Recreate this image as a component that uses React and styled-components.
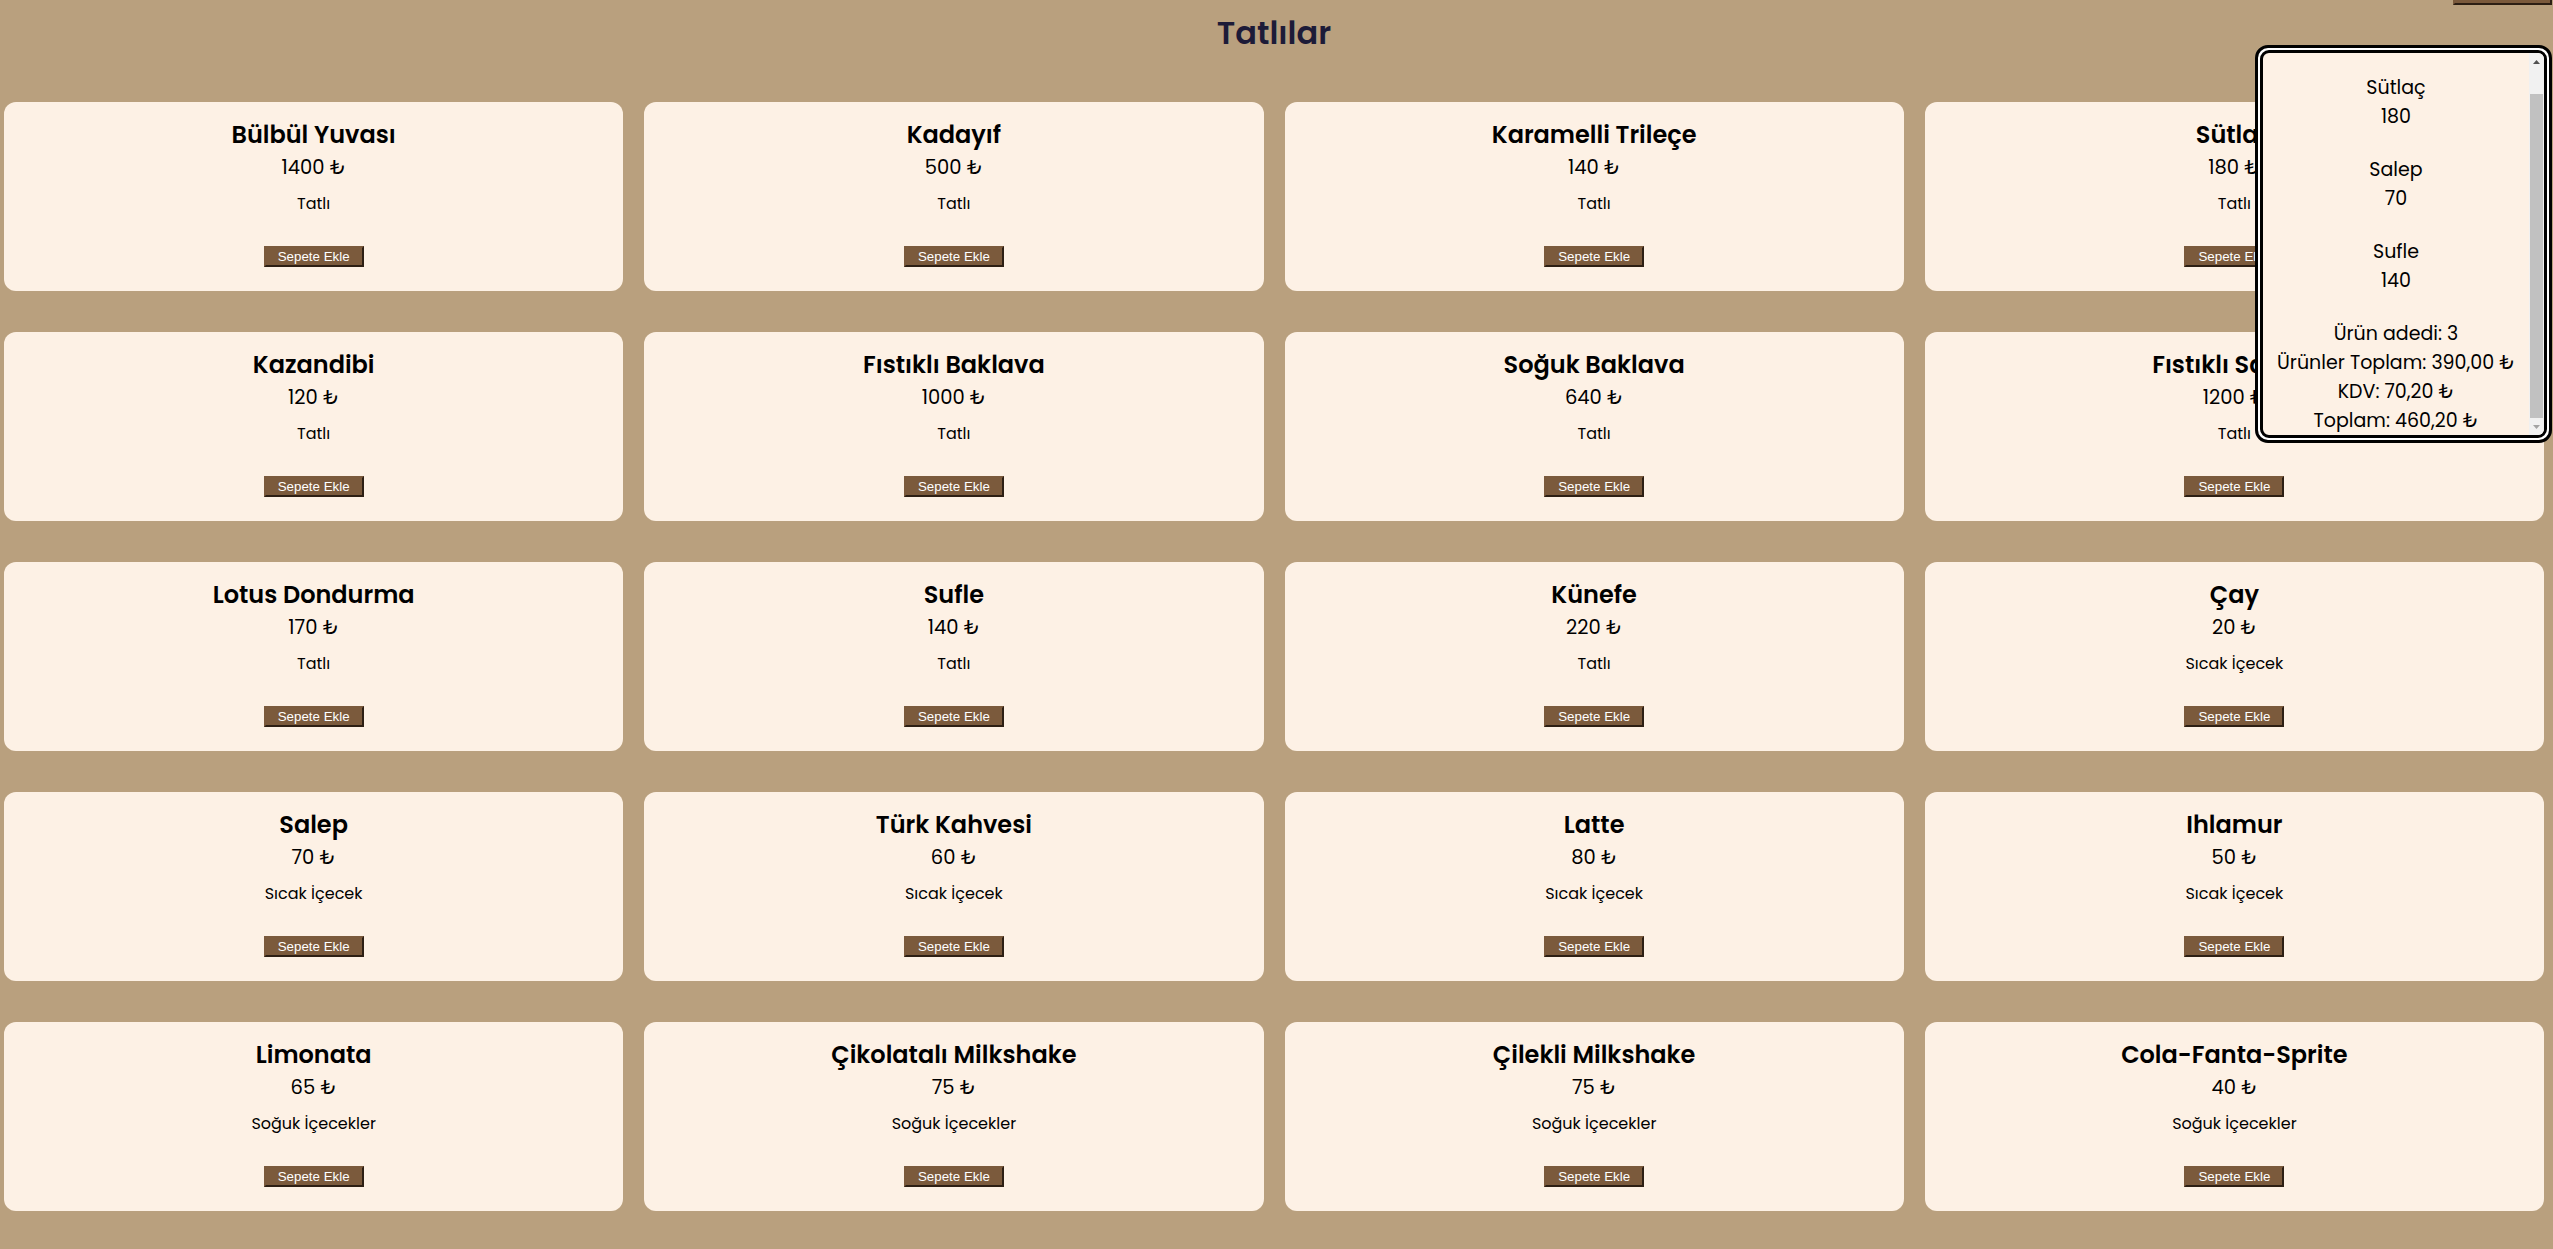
import React, { useLayoutEffect, useRef } from "react";
import styled, { createGlobalStyle } from "styled-components";

const GlobalStyle = createGlobalStyle`
  html, body { margin: 0; padding: 0; }
  body {
    background: #b9a07e;
    font-family: "Poppins", "Open Sans", "Noto Sans", sans-serif;
    color: #000;
  }
`;

const Page = styled.div`
  padding: 13px 9px 40px 4px;
`;

const Heading = styled.h1`
  margin: 0 0 49px;
  text-align: center;
  font-size: 32px;
  line-height: 40px;
  font-weight: 600;
  color: #1d1b38;
`;

const Grid = styled.div`
  display: grid;
  grid-template-columns: repeat(4, 1fr);
  column-gap: 21px;
  row-gap: 41px;
`;

const Card = styled.div`
  background: #fdf1e5;
  border-radius: 12px;
  height: 189px;
  box-sizing: border-box;
  padding-top: 18px;
  display: flex;
  flex-direction: column;
  align-items: center;
  text-align: center;
`;

const Name = styled.h2`
  margin: 0;
  font-size: 24px;
  line-height: 30px;
  font-weight: 600;
`;

const Price = styled.div`
  margin-top: 5px;
  font-size: 19.5px;
  line-height: 26px;
`;

const Category = styled.div`
  margin-top: 11px;
  font-size: 16px;
  line-height: 24px;
`;

const AddButton = styled.button`
  margin-top: 30px;
  width: 100px;
  height: 21px;
  padding: 0;
  box-sizing: border-box;
  background: #7b5a3c;
  color: #fff;
  font-family: "Liberation Sans", Arial, sans-serif;
  font-size: 13.33px;
  line-height: 15px;
  border-width: 2px;
  border-style: solid;
  border-color: #7b5a3c #2d1f14 #2d1f14 #7b5a3c;
  cursor: pointer;
`;

const ToggleButton = styled(AddButton)`
  position: fixed;
  margin: 0;
  top: -17px;
  right: 1px;
  width: 99px;
  height: 22px;
`;

const CartFrame = styled.div`
  position: fixed;
  top: 45px;
  right: 1px;
  width: 297px;
  height: 398px;
  box-sizing: border-box;
  border: 3px solid #000;
  border-radius: 13px;
  padding: 2px;
  background: #fff;
`;

const CartInner = styled.div`
  height: 100%;
  box-sizing: border-box;
  border: 3px solid #000;
  border-radius: 9px;
  background: #fdf1e5;
  overflow: hidden;
  display: flex;
`;

const CartScroll = styled.div`
  flex: 1;
  min-width: 0;
  overflow: hidden;
  text-align: center;
  font-size: 19px;
  line-height: 29px;
`;

const CartContent = styled.div`
  padding-top: 46px;
`;

const CartItem = styled.div`
  margin-bottom: 24px;
`;

const Summary = styled.div`
  margin-top: 3px;
`;

const Line = styled.div``;

const Scrollbar = styled.div`
  width: 15px;
  flex: none;
  background: #f1f1f1;
  display: flex;
  flex-direction: column;
`;

const ScrollArrow = styled.div`
  height: 17px;
  flex: none;
  display: flex;
  align-items: center;
  justify-content: center;
`;

const Track = styled.div`
  flex: 1;
  display: flex;
  flex-direction: column;
`;

const TrackSpace = styled.div`
  flex: ${(p) => p.$grow};
`;

const Thumb = styled.div`
  flex: ${(p) => p.$grow};
  margin: 0 1px;
  background: #c1c1c1;
`;

const Arrow = ({ up, color }) => (
  <svg width="7" height="4" viewBox="0 0 7 4">
    <path d={up ? "M0 4 L3.5 0 L7 4 Z" : "M0 0 L3.5 4 L7 0 Z"} fill={color} />
  </svg>
);

const products = [
  ["Bülbül Yuvası", 1400, "Tatlı"],
  ["Kadayıf", 500, "Tatlı"],
  ["Karamelli Trileçe", 140, "Tatlı"],
  ["Sütlaç", 180, "Tatlı"],
  ["Kazandibi", 120, "Tatlı"],
  ["Fıstıklı Baklava", 1000, "Tatlı"],
  ["Soğuk Baklava", 640, "Tatlı"],
  ["Fıstıklı Sarma", 1200, "Tatlı"],
  ["Lotus Dondurma", 170, "Tatlı"],
  ["Sufle", 140, "Tatlı"],
  ["Künefe", 220, "Tatlı"],
  ["Çay", 20, "Sıcak İçecek"],
  ["Salep", 70, "Sıcak İçecek"],
  ["Türk Kahvesi", 60, "Sıcak İçecek"],
  ["Latte", 80, "Sıcak İçecek"],
  ["Ihlamur", 50, "Sıcak İçecek"],
  ["Limonata", 65, "Soğuk İçecekler"],
  ["Çikolatalı Milkshake", 75, "Soğuk İçecekler"],
  ["Çilekli Milkshake", 75, "Soğuk İçecekler"],
  ["Cola-Fanta-Sprite", 40, "Soğuk İçecekler"],
];

const cart = [
  ["Sütlaç", 180],
  ["Salep", 70],
  ["Sufle", 140],
];

export default function App() {
  const scrollRef = useRef(null);
  useLayoutEffect(() => {
    if (scrollRef.current) {
      scrollRef.current.scrollTop = scrollRef.current.scrollHeight;
    }
  }, []);

  const subtotal = cart.reduce((s, [, p]) => s + p, 0);
  const vat = subtotal * 0.18;
  const fmt = (n) => n.toFixed(2).replace(".", ",");

  return (
    <>
      <GlobalStyle />
      <Page>
        <Heading>Tatlılar</Heading>
        <Grid>
          {products.map(([name, price, cat]) => (
            <Card key={name}>
              <Name>{name}</Name>
              <Price>{price} ₺</Price>
              <Category>{cat}</Category>
              <AddButton>Sepete Ekle</AddButton>
            </Card>
          ))}
        </Grid>
      </Page>
      <ToggleButton aria-label="Sepet" />
      <CartFrame>
        <CartInner>
          <CartScroll ref={scrollRef}>
            <CartContent>
              {cart.map(([name, price]) => (
                <CartItem key={name}>
                  <Line>{name}</Line>
                  <Line>{price}</Line>
                </CartItem>
              ))}
              <Summary>
                <Line>Ürün adedi: {cart.length}</Line>
                <Line>Ürünler Toplam: {fmt(subtotal)} ₺</Line>
                <Line>KDV: {fmt(vat)} ₺</Line>
                <Line>Toplam: {fmt(subtotal + vat)} ₺</Line>
              </Summary>
            </CartContent>
          </CartScroll>
          <Scrollbar>
            <ScrollArrow>
              <Arrow up color="#505050" />
            </ScrollArrow>
            <Track>
              <TrackSpace $grow={24} />
              <Thumb $grow={326} />
            </Track>
            <ScrollArrow>
              <Arrow color="#a3a3a3" />
            </ScrollArrow>
          </Scrollbar>
        </CartInner>
      </CartFrame>
    </>
  );
}
